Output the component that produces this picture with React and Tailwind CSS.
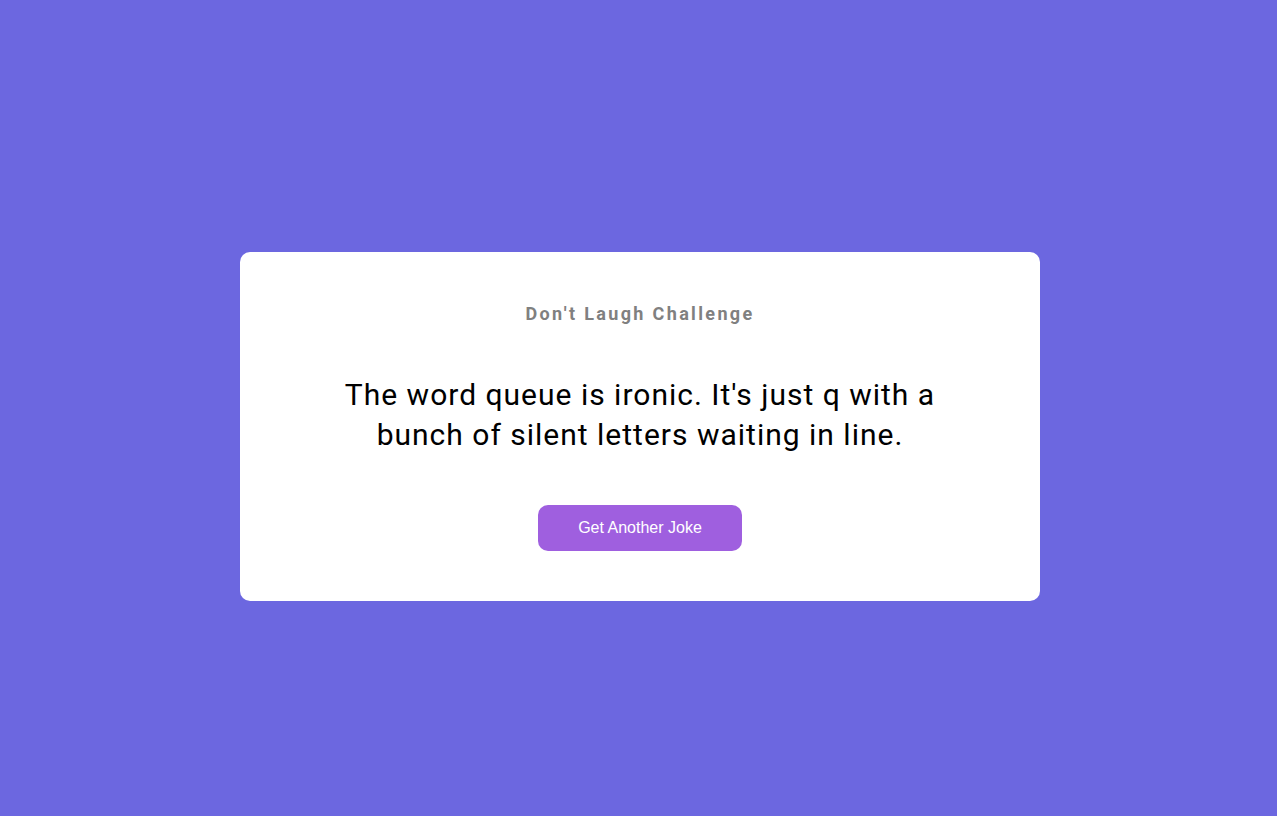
export default function App() {
  return (
    <div className="min-h-screen w-full bg-[#6c67e0] flex items-center justify-center pt-[37px] pl-[3px]">
      <div className="w-[800px] bg-white rounded-[10px] px-[50px] pt-[51px] pb-[50px] flex flex-col items-center text-center">
        <h3 className="font-['Roboto',sans-serif] text-[18px] leading-[21px] font-bold tracking-[2.35px] text-[#808080]">
          Don't Laugh Challenge
        </h3>
        <p className="mt-[51px] max-w-[600px] font-['Roboto',sans-serif] text-[30px] leading-[40px] tracking-[1px] text-black">
          The word queue is ironic. It's just q with a bunch of silent letters waiting in line.
        </p>
        <button className="mt-[50px] w-[204px] h-[46px] rounded-[10px] bg-[#9f5fdf] text-white font-['Liberation_Sans',Arial,sans-serif] text-[16px]">
          Get Another Joke
        </button>
      </div>
    </div>
  );
}
